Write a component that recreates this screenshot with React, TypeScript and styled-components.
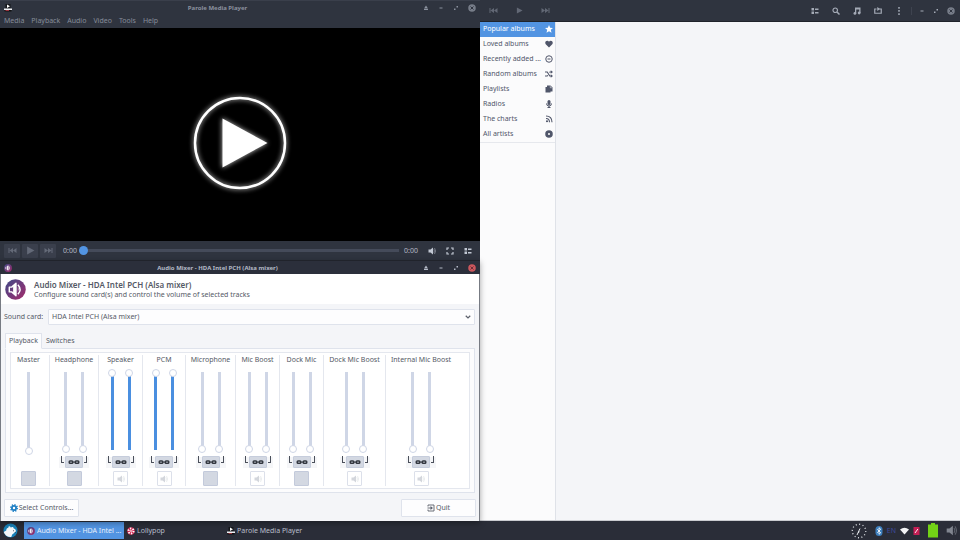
import React from "react";
import styled, { createGlobalStyle, css } from "styled-components";

const GlobalStyle = createGlobalStyle`
  * { box-sizing: border-box; }
  body { margin: 0; background: #f4f5f8; }
  body, button, select, input {
    font-family: "Noto Sans", "Open Sans", sans-serif;
    font-size: 7px;
    line-height: 10px;
  }
  button { margin: 0; padding: 0; border: 0; background: none; color: inherit; }
  svg { display: block; flex: none; }
`;

/* ---------- shell ---------- */
const Desktop = styled.div`
  display: grid;
  grid-template-rows: minmax(0, 1fr) 19px;
  height: 100vh;
  color: #555a66;
`;
const Workspace = styled.div`
  display: grid;
  grid-template-columns: 1fr 1fr;
  min-height: 0;
`;
const LeftStack = styled.div`
  display: flex;
  flex-direction: column;
  min-width: 0;
  min-height: 0;
`;
const WindowFrame = styled.section<{ $grow?: boolean }>`
  display: flex;
  flex-direction: column;
  min-width: 0;
  min-height: 0;
  flex: ${(p) => (p.$grow ? "1 1 0" : "none")};
  ${(p) =>
    !p.$grow &&
    css`
      position: relative;
      z-index: 1;
      box-shadow: 0 2px 6px rgba(0, 0, 0, 0.35);
    `}
`;
const TitleBar = styled.header<{ $active?: boolean }>`
  display: grid;
  grid-template-columns: auto 1fr auto;
  align-items: center;
  height: 14px;
  padding: 0 4px;
  background: ${(p) => (p.$active ? "#2b2f3b" : "#2f343f")};
  border-top: 1px solid ${(p) => (p.$active ? "#20232b" : "#3a3f4b")};
  color: ${(p) => (p.$active ? "#b4bac7" : "#8b919e")};
`;
const WindowTitle = styled.h1`
  margin: 0;
  font-size: 6px;
  line-height: 10px;
  font-weight: 700;
  text-align: center;
  white-space: nowrap;
`;
const WindowButtons = styled.div`
  display: flex;
  justify-content: flex-end;
  align-items: center;
  gap: 9px;
  button { display: flex; }
`;

/* ---------- media player ---------- */
const MenuBar = styled.nav`
  display: flex;
  align-items: center;
  gap: 7px;
  height: 14px;
  padding: 0 4px;
  background: #2f343f;
  color: #868c99;
`;
const Video = styled.div`
  flex: 1;
  min-height: 0;
  display: flex;
  align-items: center;
  justify-content: center;
  padding-top: 17px;
  background: #000;
`;
const Controls = styled.div`
  display: flex;
  align-items: center;
  height: 19px;
  padding: 0 8px 0 4px;
  background: #2f343f;
  color: #b4bac7;
`;
const TransportButton = styled.button`
  display: flex;
  align-items: center;
  justify-content: center;
  width: 16px;
  height: 14px;
  margin-right: 2px;
  border-radius: 1px;
  background: #3a3f4c;
  color: #646a78;
`;
const Time = styled.span`
  margin: 0 2px 0 5px;
`;
const Seek = styled.input`
  appearance: none;
  flex: 1;
  min-width: 0;
  height: 9px;
  margin: 0;
  background: none;
  &::-webkit-slider-runnable-track {
    height: 9px;
    background: linear-gradient(#454b5a, #454b5a) center / 100% 3px no-repeat;
  }
  &::-webkit-slider-thumb {
    appearance: none;
    width: 9px;
    height: 9px;
    border-radius: 50%;
    background: #5294e2;
  }
`;
const ControlIcons = styled.div`
  display: flex;
  align-items: center;
  gap: 10px;
  margin-left: 8px;
  color: #c2c8d3;
  button { display: flex; }
`;

/* ---------- mixer ---------- */
const MixerBody = styled.div`
  border: solid #777b83;
  border-width: 0 1px;
  background: #f4f5f8;
`;
const MixerHeader = styled.div`
  display: flex;
  align-items: center;
  gap: 8px;
  height: 30px;
  padding: 0 4px;
  background: #fff;
`;
const Heading = styled.h2`
  margin: 0;
  font-size: 8px;
  line-height: 11px;
  font-weight: 600;
  color: #555a66;
`;
const Subtitle = styled.p`
  margin: 0;
`;
const CardRow = styled.div`
  display: flex;
  align-items: center;
  gap: 5px;
  padding: 5px 4px 0 3px;
`;
const SelectWrap = styled.div`
  position: relative;
  flex: 1;
  svg { position: absolute; right: 4px; top: 5px; pointer-events: none; }
`;
const CardSelect = styled.select`
  appearance: none;
  display: block;
  width: 100%;
  height: 16px;
  padding: 0 3px;
  border: 1px solid #dfe3ec;
  border-radius: 1px;
  background: #fdfdfe;
  color: #555a66;
`;
const TabList = styled.div`
  display: flex;
  height: 16px;
  margin: 8px 4px 0;
  position: relative;
`;
const Tab = styled.button<{ $active?: boolean }>`
  padding: 0 3px;
  color: #555a66;
  border: 1px solid transparent;
  ${(p) =>
    p.$active &&
    css`
      border-color: #dfe3ec;
      border-bottom-color: #fcfcfd;
      background: #fcfcfd;
      border-radius: 1px 1px 0 0;
    `}
`;
const TabPage = styled.div`
  margin: -1px 4px 0;
  padding: 3px 4px;
  border: 1px solid #dfe3ec;
  background: #fcfcfd;
`;
const Channels = styled.div`
  display: grid;
  grid-template-columns: 39px 49px 44px 43px 50px 44px 44px 62px 70px;
  padding: 2px 0;
  border: 1px solid #e4e7ee;
  background: #fff;
`;
const Channel = styled.fieldset`
  display: grid;
  grid-template-rows: 11px 84px 12px 15px;
  justify-items: center;
  row-gap: 3px;
  min-width: 0;
  margin: 0;
  padding: 0;
  border: 0;
  border-right: 1px solid #e4e7ee;
  &:first-child { padding-right: 3px; }
  &:last-child { border-right: 0; }
`;
const ChannelName = styled.span`
  white-space: nowrap;
`;
const Faders = styled.div`
  display: flex;
  gap: 9px;
`;
const Fader = styled.input<{ $full: boolean; $length: number }>`
  appearance: none;
  writing-mode: vertical-lr;
  direction: rtl;
  width: 8px;
  height: ${(p) => p.$length}px;
  margin: 0;
  background: none;
  &::-webkit-slider-runnable-track {
    width: 8px;
    height: ${(p) => p.$length}px;
    background: linear-gradient(
        ${(p) => (p.$full ? "#4a8fe0, #4a8fe0" : "#cfd6e6, #cfd6e6")}
      )
      center / 3px calc(100% - 6px) no-repeat;
  }
  &::-webkit-slider-thumb {
    appearance: none;
    width: 8px;
    height: 8px;
    border: 1px solid #cfd6e6;
    border-radius: 50%;
    background: #fff;
  }
`;
const LinkRow = styled.div`
  display: flex;
  align-items: flex-start;
  gap: 1px;
  height: 12px;
  padding: 0 2px;
  background: linear-gradient(#f5f6f8, #f5f6f8) bottom / 100% 11px no-repeat;
`;
const Corner = styled.span<{ $side: "left" | "right" }>`
  width: 3px;
  height: 7px;
  border-bottom: 1px solid #4b505b;
  ${(p) => (p.$side === "left" ? "border-left" : "border-right")}: 1px solid #4b505b;
`;
const LinkButton = styled.button`
  display: flex;
  align-items: center;
  justify-content: center;
  width: 18px;
  height: 12px;
  border: 1px solid #c6cddc;
  border-radius: 1px;
  background: #d3d8e2;
`;
const MuteButton = styled.button<{ $on: boolean }>`
  display: flex;
  align-items: center;
  justify-content: center;
  width: 15px;
  height: 15px;
  border: 1px solid ${(p) => (p.$on ? "#c3cadb" : "#dce0ea")};
  border-radius: 1px;
  background: ${(p) => (p.$on ? "#d3d8e2" : "#fff")};
  color: #d3d6dc;
`;
const Actions = styled.div`
  display: flex;
  justify-content: space-between;
  padding: 6px 3px 4px;
`;
const ActionButton = styled.button`
  display: flex;
  align-items: center;
  justify-content: center;
  gap: 1px;
  min-width: 75px;
  height: 18px;
  padding: 0 4px;
  border: 1px solid #dfe3ec;
  border-radius: 1px;
  background: #fdfdfe;
`;

/* ---------- music library ---------- */
const Library = styled.section`
  display: grid;
  grid-template-rows: 22px minmax(0, 1fr);
  min-width: 0;
  border-bottom: 1px solid #c9cbd0;
`;
const LibraryHeader = styled.header`
  display: flex;
  justify-content: space-between;
  align-items: center;
  padding: 0 5px 0 9px;
  background: #2f343f;
  border-bottom: 1px solid #1f232b;
`;
const ButtonGroup = styled.div<{ $gap: number; $bright?: boolean }>`
  display: flex;
  align-items: center;
  gap: ${(p) => p.$gap}px;
  color: ${(p) => (p.$bright ? "#a4aab6" : "#626875")};
  button { display: flex; }
`;
const Divider = styled.span`
  width: 1px;
  height: 8px;
  margin: 0 -1px 0 -5px;
  background: #3e434f;
`;
const LibraryMain = styled.div`
  display: grid;
  grid-template-columns: 76px 1fr;
`;
const Sidebar = styled.ul`
  margin: 0;
  padding: 0;
  list-style: none;
  background: #fbfbfc;
  border-right: 1px solid #dfe2e8;
`;
const SidebarItem = styled.li`
  &:last-child { border-bottom: 1px solid #e6e8ed; }
`;
const SidebarLink = styled.a<{ $active?: boolean }>`
  display: flex;
  align-items: center;
  justify-content: space-between;
  height: 15px;
  padding: 0 2px 1px 3px;
  text-decoration: none;
  white-space: nowrap;
  background: ${(p) => (p.$active ? "#5294e2" : "transparent")};
  color: ${(p) => (p.$active ? "#fff" : "#50566a")};
`;

/* ---------- task bar ---------- */
const Panel = styled.footer`
  display: flex;
  align-items: center;
  padding: 0 3px;
  background: #2a2d38;
  color: #b9bfcb;
`;
const Launcher = styled.button`
  display: flex;
  margin-right: 6px;
`;
const Task = styled.button<{ $active?: boolean }>`
  display: flex;
  align-items: center;
  gap: 2px;
  width: 100px;
  height: 17px;
  padding: 0 3px;
  white-space: nowrap;
  background: ${(p) => (p.$active ? "#5294e2" : "transparent")};
  color: ${(p) => (p.$active ? "#e8f0fb" : "inherit")};
`;
const Tray = styled.div`
  display: flex;
  align-items: center;
  gap: 8px;
  margin-left: auto;
`;
const TrayGroup = styled.div`
  display: flex;
  align-items: center;
  gap: 4px;
`;
const TrayVolume = styled.button`
  display: flex;
  color: #80858f;
`;
const Language = styled.span`
  color: #3d4a9c;
`;

/* ---------- icons ---------- */
type IconProps = { size?: number };
const Speaker = ({ size = 8 }: IconProps) => (
  <svg width={size} height={size} viewBox="0 0 16 16" fill="currentColor">
    <path d="M1 5h4l5-4v14l-5-4H1z" />
    <path d="M11.500 4.500q2.500 3.500 0 7M13 2q4.500 6 0 12" fill="none" stroke="currentColor" strokeWidth="1.500" opacity=".6" />
  </svg>
);
const Skip = ({ back }: { back?: boolean }) => (
  <svg width="9" height="7" viewBox="0 0 18 14" fill="currentColor">
    <g transform={back ? "translate(18 0) scale(-1 1)" : undefined}>
      <path d="M1 2l7 5-7 5zM8 2l7 5-7 5zM15 2h2v10h-2z" />
    </g>
  </svg>
);
const Play = ({ size = 8 }: IconProps) => (
  <svg width={size} height={size} viewBox="0 0 16 16" fill="currentColor">
    <path d="M2 1l13 7-13 7z" />
  </svg>
);
const ListIcon = () => (
  <svg width="8" height="8" viewBox="0 0 16 16" fill="currentColor">
    <path d="M1 2h5v5H1zM8 3h7v3H8zM1 9h5v5H1zM8 10h7v3H8z" />
  </svg>
);
const Fullscreen = () => (
  <svg width="8" height="8" viewBox="0 0 16 16" fill="none" stroke="currentColor" strokeWidth="2.400">
    <path d="M6 2H2v4M10 2h4v4M14 10v4h-4M6 14H2v-4" />
  </svg>
);
const Shade = () => (
  <svg width="6" height="6" viewBox="0 0 12 12" fill="currentColor">
    <path d="M6 1l4 6H2zM2 8h8v2H2z" />
  </svg>
);
const Minimize = () => (
  <svg width="6" height="6" viewBox="0 0 12 12" fill="currentColor">
    <path d="M3 5h6v2H3z" />
  </svg>
);
const Maximize = () => (
  <svg width="6" height="6" viewBox="0 0 12 12" fill="currentColor">
    <path d="M6 2h4v4zM2 6l4 4H2z" />
    <path d="M4 8l4-4" stroke="currentColor" opacity=".5" />
  </svg>
);
const Close = ({ fill, cross }: { fill: string; cross: string }) => (
  <svg width="8" height="8" viewBox="0 0 16 16">
    <circle cx="8" cy="8" r="7.500" fill={fill} />
    <path d="M5 5l6 6M11 5l-6 6" stroke={cross} strokeWidth="2" />
  </svg>
);
const Clapper = () => (
  <svg width="8" height="8" viewBox="0 0 16 16">
    <path d="M3 0h10v9H3z" fill="#14161a" />
    <path d="M6 1l6 3.500L6 8z" fill="#fff" />
    <path d="M0 9h16v3H0z" fill="#eceef1" />
    <path d="M1 12h14v3H1z" fill="#111" />
    <path d="M3 12h7v1.500H3z" fill="#c8414f" />
  </svg>
);
const MixerIcon = ({ size, id }: { size: number; id: string }) => (
  <svg width={size} height={size} viewBox="0 0 44 44">
    <defs>
      <linearGradient id={id} x1="0" y1="0" x2="1" y2="1">
        <stop offset="0" stopColor="#3f4a86" />
        <stop offset=".5" stopColor="#713a7c" />
        <stop offset="1" stopColor="#a52b68" />
      </linearGradient>
    </defs>
    <circle cx="22" cy="22" r="21.500" fill={`url(#${id})`} />
    <path d="M9 17h5l9-8v26l-9-8H9z" fill="none" stroke="#fff" strokeWidth="3" strokeLinejoin="round" />
    <path d="M17 14l6-5v26l-6-5z" fill="#fff" />
    <path d="M27 12q9 10 0 20" fill="none" stroke="#fff" strokeWidth="3" />
    <path d="M27 17q3 5 0 10z" fill="#fff" />
  </svg>
);
const Chain = () => (
  <svg width="12" height="6" viewBox="0 0 24 12" fill="none" stroke="#33373f" strokeWidth="3">
    <rect x="2.500" y="4" width="7" height="4.500" rx="1.500" />
    <rect x="14.500" y="4" width="7" height="4.500" rx="1.500" />
    <path d="M9 6.200h6" strokeWidth="2" />
  </svg>
);
const Chevron = () => (
  <svg width="6" height="6" viewBox="0 0 12 12" fill="none" stroke="#5c616c" strokeWidth="2.400">
    <path d="M1.500 3.500L6 8l4.500-4.500" />
  </svg>
);
const Gear = () => (
  <svg width="8" height="8" viewBox="0 0 16 16" fill="none" stroke="#1f7fc4">
    <circle cx="8" cy="8" r="4.200" strokeWidth="3.600" />
    <circle cx="8" cy="8" r="6.500" strokeWidth="3" strokeDasharray="2.500 2.600" />
  </svg>
);
const Exit = () => (
  <svg width="8" height="8" viewBox="0 0 16 16" fill="none" stroke="#5c616c" strokeWidth="1.800">
    <path d="M2 5V2h12v12H2v-3M1 8h8" />
    <path d="M7 4l5 4-5 4z" fill="#5c616c" stroke="none" />
  </svg>
);
const PlayBadge = () => (
  <svg width="112" height="112" viewBox="0 0 112 112">
    <defs>
      <filter id="glow" x="-20%" y="-20%" width="140%" height="140%">
        <feGaussianBlur stdDeviation="2.500" />
      </filter>
    </defs>
    <g filter="url(#glow)" opacity=".7">
      <circle cx="56" cy="56" r="45" fill="none" stroke="#fff" strokeWidth="3" />
      <path d="M38 31l46 25-46 25z" fill="#fff" />
    </g>
    <circle cx="56" cy="56" r="45" fill="none" stroke="#fff" strokeWidth="2.500" />
    <path d="M38.500 31.500l45 24.500-45 24.500z" fill="#fff" />
  </svg>
);
const Search = () => (
  <svg width="8" height="8" viewBox="0 0 16 16" fill="none" stroke="currentColor" strokeWidth="2.400">
    <circle cx="6.500" cy="6.500" r="4.500" />
    <path d="M10 10l5 5" strokeWidth="3" />
  </svg>
);
const Note = () => (
  <svg width="8" height="8" viewBox="0 0 16 16" fill="currentColor">
    <path d="M4 1h11v11h-2.500V5h-6v8H4z" />
    <circle cx="3.800" cy="12.800" r="2.800" />
    <circle cx="12.300" cy="12" r="2.800" />
  </svg>
);
const Repeat = () => (
  <svg width="8" height="8" viewBox="0 0 16 16" fill="none" stroke="currentColor" strokeWidth="2.400">
    <path d="M5 4H1.500v8.500h13V4H11" />
    <path d="M6.500 0l6 4-6 4z" fill="currentColor" stroke="none" />
  </svg>
);
const Dots = () => (
  <svg width="8" height="8" viewBox="0 0 16 16" fill="currentColor">
    <path d="M6.500 0h3v3.500h-3zM6.500 6.200h3v3.500h-3zM6.500 12.500h3V16h-3z" />
  </svg>
);
const sideIcons: Record<string, React.ReactNode> = {
  star: <path d="M8 0l2.300 5.500 5.700.4-4.400 3.800L13 15.500l-5-3.200-5 3.200 1.400-5.800L0 5.900l5.700-.4z" />,
  heart: <path d="M8 15L1.500 8.500C-1 5 1.500 1.500 4.500 1.500c1.500 0 2.800.8 3.500 2 .7-1.200 2-2 3.500-2 3 0 5.500 3.500 3 7z" />,
  clock: (
    <g fill="none" stroke="currentColor" strokeWidth="2">
      <circle cx="8" cy="8" r="6.500" />
      <path d="M5 8h6" />
    </g>
  ),
  shuffle: (
    <g fill="none" stroke="currentColor" strokeWidth="2.200">
      <path d="M0 4h4.500l5 8H13M0 12h4.500l1-1.500M9 5l.8-1H13" />
      <path d="M11.500 .5l4.500 3.500-4.500 3.500zM11.500 8.500L16 12l-4.500 3.500z" fill="currentColor" stroke="none" />
    </g>
  ),
  pages: (
    <g>
      <path d="M1 4h3v8h7v3H1z" />
      <path d="M4 1h7l4 4v8H4z" />
      <path d="M10.500 1.500v4h4" fill="none" stroke="#fbfbfc" />
    </g>
  ),
  mic: (
    <g>
      <rect x="5" y="0" width="6" height="10" rx="3" />
      <path d="M3 7q0 5 5 5t5-5M8 12v3M5 15h6" fill="none" stroke="currentColor" strokeWidth="2" />
    </g>
  ),
  feed: (
    <g fill="none" stroke="currentColor" strokeWidth="2.200">
      <circle cx="4" cy="12.500" r="1" />
      <path d="M2 7q7 0 7 7.500M2 2q12 0 12 12.500" />
    </g>
  ),
  disc: <circle cx="8" cy="8" r="4.800" fill="none" stroke="currentColor" strokeWidth="5.500" />,
};
const SideIcon = ({ name }: { name: string }) => (
  <svg width="8" height="8" viewBox="0 0 16 16" fill="currentColor">
    {sideIcons[name]}
  </svg>
);
const Mouse = () => (
  <svg width="15" height="15" viewBox="0 0 30 30">
    <circle cx="15" cy="15" r="14" fill="#1780b8" />
    <path d="M1.500 18l5-3c0-4 2-5 4-5 0-4 3-5 5-1 3-2 6-1 6 2 4 1 5 4 4 7l-3 1c-1 2-3 3-4 4l-2 5c-6 1-13-3-15-10z" fill="#f3f7fa" />
    <path d="M20 15l2 1M24 18l2 1" stroke="#2b3a4a" strokeWidth="1.500" />
  </svg>
);
const Lolly = () => (
  <svg width="8" height="8" viewBox="0 0 16 16">
    <circle cx="8" cy="8" r="7.500" fill="#d42a55" />
    <circle cx="8" cy="8" r="5" fill="none" stroke="#fff" strokeWidth="4" strokeDasharray="2.600 2.630" />
    <circle cx="8" cy="8" r="2" fill="#f3c7d2" />
  </svg>
);
const Dial = () => (
  <svg width="16" height="16" viewBox="0 0 32 32" fill="none" stroke="#e4e7ec">
    <circle cx="16" cy="16" r="13.500" strokeWidth="2.600" strokeDasharray="2 5.070" />
    <path d="M12 24l6-13M16 16l-1 4" strokeWidth="2" />
  </svg>
);
const Bluetooth = () => (
  <svg width="8" height="10" viewBox="0 0 16 20">
    <rect x="1" width="14" height="20" rx="7" fill="#3d7fbd" />
    <path d="M4.500 6.500l7 7L8 16.500v-13l3.500 3-7 7" fill="none" stroke="#fff" strokeWidth="1.600" />
  </svg>
);
const Wifi = () => (
  <svg width="9" height="8" viewBox="0 0 18 16">
    <path d="M0 5q9-7 18 0L9 15z" fill="#f2f3f5" />
  </svg>
);
const Notes = () => (
  <svg width="7" height="8" viewBox="0 0 14 16">
    <path d="M1 0h12v16H1z" fill="#c41f55" />
    <path d="M4 12l5-7M8 4l2 2" stroke="#fff" strokeWidth="1.800" />
  </svg>
);
const Battery = () => (
  <svg width="10" height="15" viewBox="0 0 20 30" fill="#73d216">
    <path d="M6 0h8v3h6v26H0V3h6z" />
  </svg>
);

/* ---------- data ---------- */
type ChannelData = { name: string; level: number; mute: boolean; mono?: boolean };
const channels: ChannelData[] = [
  { name: "Master", level: 0, mute: true, mono: true },
  { name: "Headphone", level: 0, mute: true },
  { name: "Speaker", level: 100, mute: false },
  { name: "PCM", level: 100, mute: false },
  { name: "Microphone", level: 0, mute: true },
  { name: "Mic Boost", level: 0, mute: false },
  { name: "Dock Mic", level: 0, mute: true },
  { name: "Dock Mic Boost", level: 0, mute: false },
  { name: "Internal Mic Boost", level: 0, mute: false },
];
const sidebar = [
  ["Popular albums", "star"],
  ["Loved albums", "heart"],
  ["Recently added ...", "clock"],
  ["Random albums", "shuffle"],
  ["Playlists", "pages"],
  ["Radios", "mic"],
  ["The charts", "feed"],
  ["All artists", "disc"],
];

const WindowControls = ({ active }: { active?: boolean }) => (
  <WindowButtons>
    <button aria-label="Shade"><Shade /></button>
    <button aria-label="Minimize"><Minimize /></button>
    <button aria-label="Maximize"><Maximize /></button>
    <button aria-label="Close">
      <Close fill={active ? "#cc575d" : "#777d89"} cross={active ? "#6d2f38" : "#2f343f"} />
    </button>
  </WindowButtons>
);

const ChannelStrip = ({ name, level, mute, mono }: ChannelData) => (
  <Channel aria-label={name}>
    <ChannelName>{name}</ChannelName>
    <Faders>
      {(mono ? ["Volume"] : ["Left", "Right"]).map((side) => (
        <Fader
          key={side}
          type="range"
          defaultValue={level}
          $full={level === 100}
          $length={mono ? 86 : 84}
          aria-label={`${name} ${side}`}
        />
      ))}
    </Faders>
    {mono ? (
      <span />
    ) : (
      <LinkRow>
        <Corner $side="left" />
        <LinkButton aria-label={`Lock ${name} channels`}><Chain /></LinkButton>
        <Corner $side="right" />
      </LinkRow>
    )}
    <MuteButton $on={mute} aria-label={`Mute ${name}`}>{!mute && <Speaker />}</MuteButton>
  </Channel>
);

export default function App() {
  return (
    <Desktop>
      <GlobalStyle />
      <Workspace>
        <LeftStack>
          <WindowFrame $grow>
            <TitleBar>
              <Clapper />
              <WindowTitle>Parole Media Player</WindowTitle>
              <WindowControls />
            </TitleBar>
            <MenuBar>
              {["Media", "Playback", "Audio", "Video", "Tools", "Help"].map((m) => (
                <button key={m}>{m}</button>
              ))}
            </MenuBar>
            <Video><PlayBadge /></Video>
            <Controls>
              <TransportButton aria-label="Previous"><Skip back /></TransportButton>
              <TransportButton aria-label="Play"><Play size={9} /></TransportButton>
              <TransportButton aria-label="Next"><Skip /></TransportButton>
              <Time>0:00</Time>
              <Seek type="range" defaultValue={0} aria-label="Position" />
              <Time>0:00</Time>
              <ControlIcons>
                <button aria-label="Volume"><Speaker /></button>
                <button aria-label="Fullscreen"><Fullscreen /></button>
                <button aria-label="Playlist"><ListIcon /></button>
              </ControlIcons>
            </Controls>
          </WindowFrame>

          <WindowFrame>
            <TitleBar $active>
              <MixerIcon size={8} id="mixerTitle" />
              <WindowTitle>Audio Mixer - HDA Intel PCH (Alsa mixer)</WindowTitle>
              <WindowControls active />
            </TitleBar>
            <MixerBody>
              <MixerHeader>
                <MixerIcon size={21} id="mixerHead" />
                <div>
                  <Heading>Audio Mixer - HDA Intel PCH (Alsa mixer)</Heading>
                  <Subtitle>Configure sound card(s) and control the volume of selected tracks</Subtitle>
                </div>
              </MixerHeader>
              <CardRow>
                <label htmlFor="card">Sound card:</label>
                <SelectWrap>
                  <CardSelect id="card">
                    <option>HDA Intel PCH (Alsa mixer)</option>
                  </CardSelect>
                  <Chevron />
                </SelectWrap>
              </CardRow>
              <TabList role="tablist">
                <Tab role="tab" aria-selected="true" $active>Playback</Tab>
                <Tab role="tab" aria-selected="false">Switches</Tab>
              </TabList>
              <TabPage role="tabpanel">
                <Channels>
                  {channels.map((c) => <ChannelStrip key={c.name} {...c} />)}
                </Channels>
              </TabPage>
              <Actions>
                <ActionButton><Gear />Select Controls...</ActionButton>
                <ActionButton><Exit />Quit</ActionButton>
              </Actions>
            </MixerBody>
          </WindowFrame>
        </LeftStack>

        <Library>
          <LibraryHeader>
            <ButtonGroup $gap={18}>
              <button aria-label="Previous"><Skip back /></button>
              <button aria-label="Play"><Play size={7} /></button>
              <button aria-label="Next"><Skip /></button>
            </ButtonGroup>
            <ButtonGroup $gap={13} $bright>
              <button aria-label="View"><ListIcon /></button>
              <button aria-label="Search"><Search /></button>
              <button aria-label="Current track"><Note /></button>
              <button aria-label="Repeat"><Repeat /></button>
              <button aria-label="Menu"><Dots /></button>
              <ButtonGroup $gap={8} $bright>
                <Divider />
                <button aria-label="Minimize"><Minimize /></button>
                <button aria-label="Maximize"><Maximize /></button>
                <button aria-label="Close"><Close fill="#777d89" cross="#2f343f" /></button>
              </ButtonGroup>
            </ButtonGroup>
          </LibraryHeader>
          <LibraryMain>
            <Sidebar>
              {sidebar.map(([label, icon], i) => (
                <SidebarItem key={label}>
                  <SidebarLink href="#" $active={i === 0}>
                    {label}
                    <SideIcon name={icon} />
                  </SidebarLink>
                </SidebarItem>
              ))}
            </Sidebar>
          </LibraryMain>
        </Library>
      </Workspace>

      <Panel>
        <Launcher aria-label="Applications"><Mouse /></Launcher>
        <Task $active><MixerIcon size={8} id="mixerTask" />Audio Mixer - HDA Intel ...</Task>
        <Task><Lolly />Lollypop</Task>
        <Task><Clapper />Parole Media Player</Task>
        <Tray>
          <Dial />
          <TrayGroup>
            <Bluetooth />
            <Language>EN</Language>
            <Wifi />
            <Notes />
          </TrayGroup>
          <Battery />
          <TrayVolume aria-label="Volume"><Speaker size={11} /></TrayVolume>
        </Tray>
      </Panel>
    </Desktop>
  );
}
